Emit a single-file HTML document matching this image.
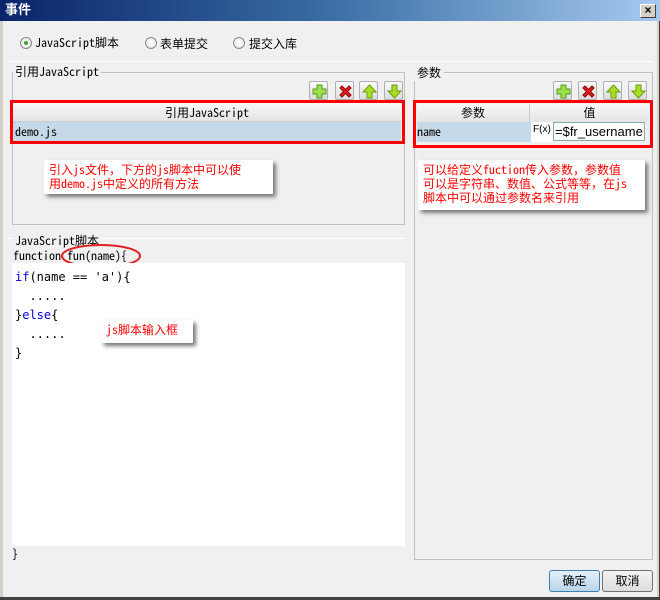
<!DOCTYPE html>
<html><head><meta charset="utf-8"><style>
*{margin:0;padding:0;box-sizing:border-box}
body{width:660px;height:600px;background:#f0f0f0;position:relative;overflow:hidden;font-family:"Liberation Sans","Noto Sans CJK SC",sans-serif;font-size:12px;color:#000}
.a{position:absolute}
.mono{font-family:"Noto Sans Mono CJK SC","Liberation Mono","Noto Sans CJK SC",monospace;font-size:12px;line-height:14px}
.title{left:0;top:0;width:660px;height:21px;background:linear-gradient(to right,#0a246a,#3a6ea5 50%,#a6caf0);color:#fff;font-weight:bold;font-size:13px;line-height:20px;padding-left:5px}
.close{left:640px;top:4px;width:16px;height:14px;background:#d4d0c8;border:1px solid;border-color:#fff #404040 #404040 #fff;font-size:12px;line-height:11px;text-align:center;color:#000;font-weight:bold}
.radio{width:12px;height:12px;border-radius:50%;border:1px solid #8a8a8a;background:radial-gradient(#fff,#e0e0e0)}
.hl{height:1px;background:#a0a0a0;border-bottom:1px solid #fff}
.box{border:1px solid #c0c0c0}
.btn{width:19px;height:19px;border:1px solid #b0b0b0;border-radius:2px;background:linear-gradient(#fafafa,#dcdcdc)}
.btn svg{position:absolute;left:1px;top:1px}
.red{border:3px solid #f00}
.note{background:#fff;color:#f00;box-shadow:3px 3px 4px #777;font-family:"Noto Sans Mono CJK SC","Liberation Mono","Noto Sans CJK SC",monospace;font-size:12px;line-height:14px;padding:3px 5px;white-space:nowrap}
.hdr{background:linear-gradient(#f8f8f8,#e4e4e4);text-align:center}
.bbtn{width:51px;height:22px;border:1px solid #707070;border-radius:3px;text-align:center;line-height:20px;font-size:12px}
</style></head><body>
<div class="a title">事件</div>
<div class="a close">×</div>
<div class="a" style="left:0;top:21px;width:3px;height:579px;background:#d4d0c8"></div>
<div class="a" style="left:657px;top:21px;width:3px;height:579px;background:#d4d0c8;border-right:1px solid #404040"></div>
<div class="a" style="left:0;top:597px;width:660px;height:3px;background:#404040"></div>

<div class="a radio" style="left:20px;top:37px"><div class="a" style="left:3px;top:3px;width:4px;height:4px;border-radius:50%;background:#3aa03a"></div></div>
<div class="a mono" style="left:35px;top:36px">JavaScript脚本</div>
<div class="a radio" style="left:145px;top:37px"></div>
<div class="a" style="left:160px;top:35px">表单提交</div>
<div class="a radio" style="left:233px;top:37px"></div>
<div class="a" style="left:249px;top:35px">提交入库</div>
<div class="a hl" style="left:7px;top:61px;width:646px"></div>

<div class="a box" style="left:12px;top:72px;width:393px;height:153px"></div>
<div class="a mono" style="left:13px;top:65px;background:#f0f0f0;padding:0 2px">引用JavaScript</div>
<div class="a box" style="left:414px;top:72px;width:239px;height:488px"></div>
<div class="a" style="left:414px;top:64px;background:#f0f0f0;padding:0 3px">参数</div>

<svg width="0" height="0" style="position:absolute"><defs>
<g id="plus"><path d="M6 2h5v4h4v5h-4v4H6v-4H2V6h4z" fill="#9be04a" stroke="#5a9a20"/></g>
<g id="x"><path d="M3 5l2-2 3.5 3.5L12 3l2 2-3.5 3.5L14 12l-2 2-3.5-3.5L5 14l-2-2 3.5-3.5z" fill="#e02020" stroke="#900"/></g>
<g id="up"><path d="M8.5 2L15 9h-4v6H6V9H2z" fill="#a8e020" stroke="#6a9a10"/></g>
<g id="dn"><path d="M8.5 15L15 8h-4V2H6v6H2z" fill="#a8e020" stroke="#6a9a10"/></g>
</defs></svg>
<div class="a btn" style="left:309px;top:81px"><svg width="17" height="17"><use href="#plus"/></svg></div>
<div class="a btn" style="left:335px;top:81px"><svg width="17" height="17"><use href="#x"/></svg></div>
<div class="a btn" style="left:359px;top:81px"><svg width="17" height="17"><use href="#up"/></svg></div>
<div class="a btn" style="left:384px;top:81px"><svg width="17" height="17"><use href="#dn"/></svg></div>
<div class="a btn" style="left:553px;top:81px"><svg width="17" height="17"><use href="#plus"/></svg></div>
<div class="a btn" style="left:578px;top:81px"><svg width="17" height="17"><use href="#x"/></svg></div>
<div class="a btn" style="left:603px;top:81px"><svg width="17" height="17"><use href="#up"/></svg></div>
<div class="a btn" style="left:628px;top:81px"><svg width="17" height="17"><use href="#dn"/></svg></div>

<div class="a hdr mono" style="left:13px;top:103px;width:388px;height:19px;line-height:19px;border-bottom:1px solid #ccc">引用JavaScript</div>
<div class="a mono" style="left:13px;top:122px;width:388px;height:19px;line-height:19px;background:#c6d9e8;padding-left:2px">demo.js</div>
<div class="a red" style="left:10px;top:100px;width:395px;height:44px"></div>

<div class="a hdr" style="left:417px;top:104px;width:113px;height:18px;line-height:18px;border-right:1px solid #ccc">参数</div>
<div class="a hdr" style="left:530px;top:104px;width:119px;height:18px;line-height:18px">值</div>
<div class="a mono" style="left:417px;top:122px;width:114px;height:20px;line-height:20px;background:#c6d9e8">name</div>
<div class="a" style="left:531px;top:122px;width:22px;height:20px;background:#fff;font-size:10px;line-height:16px;padding-left:2px">F(x)</div>
<div class="a" style="left:553px;top:122px;width:92px;height:19px;background:#fff;border:1px solid #8aa;font-size:13px;line-height:17px;padding-left:1px">=$fr_username</div>
<div class="a red" style="left:413px;top:100px;width:240px;height:48px"></div>

<div class="a note" style="left:44px;top:160px;width:229px;height:34px">引入js文件，下方的js脚本中可以使<br>用demo.js中定义的所有方法</div>
<div class="a note" style="left:418px;top:160px;width:227px;height:50px">可以给定义fuction传入参数，参数值<br>可以是字符串、数值、公式等等，在js<br>脚本中可以通过参数名来引用</div>

<div class="a hl" style="left:7px;top:238px;width:398px"></div>
<div class="a mono" style="left:13px;top:234px;background:#f0f0f0;padding:0 2px">JavaScript脚本</div>
<div class="a mono" style="left:13px;top:249px">function fun(name){</div>
<svg class="a" style="left:60px;top:243px" width="84" height="28"><ellipse cx="41" cy="13" rx="39" ry="11" fill="none" stroke="#e02020" stroke-width="2"/></svg>
<div class="a" style="left:12px;top:263px;width:393px;height:283px;background:#fff"></div>
<div class="a" style="left:15px;top:268px;font-family:'DejaVu Sans Mono',monospace;font-size:12px;line-height:19px;white-space:pre"><span style="color:#0000e0">if</span>(name == 'a'){
  .....
}<span style="color:#0000e0">else</span>{
  .....
}</div>
<div class="a note" style="left:101px;top:320px;width:92px;height:23px">js脚本输入框</div>
<div class="a mono" style="left:12px;top:547px">}</div>

<div class="a bbtn" style="left:549px;top:570px;background:linear-gradient(#e4f0fa,#b8d4ea);border-color:#3c7fb1">确定</div>
<div class="a bbtn" style="left:602px;top:570px;background:linear-gradient(#f4f4f4,#dcdcdc)">取消</div>
</body></html>
